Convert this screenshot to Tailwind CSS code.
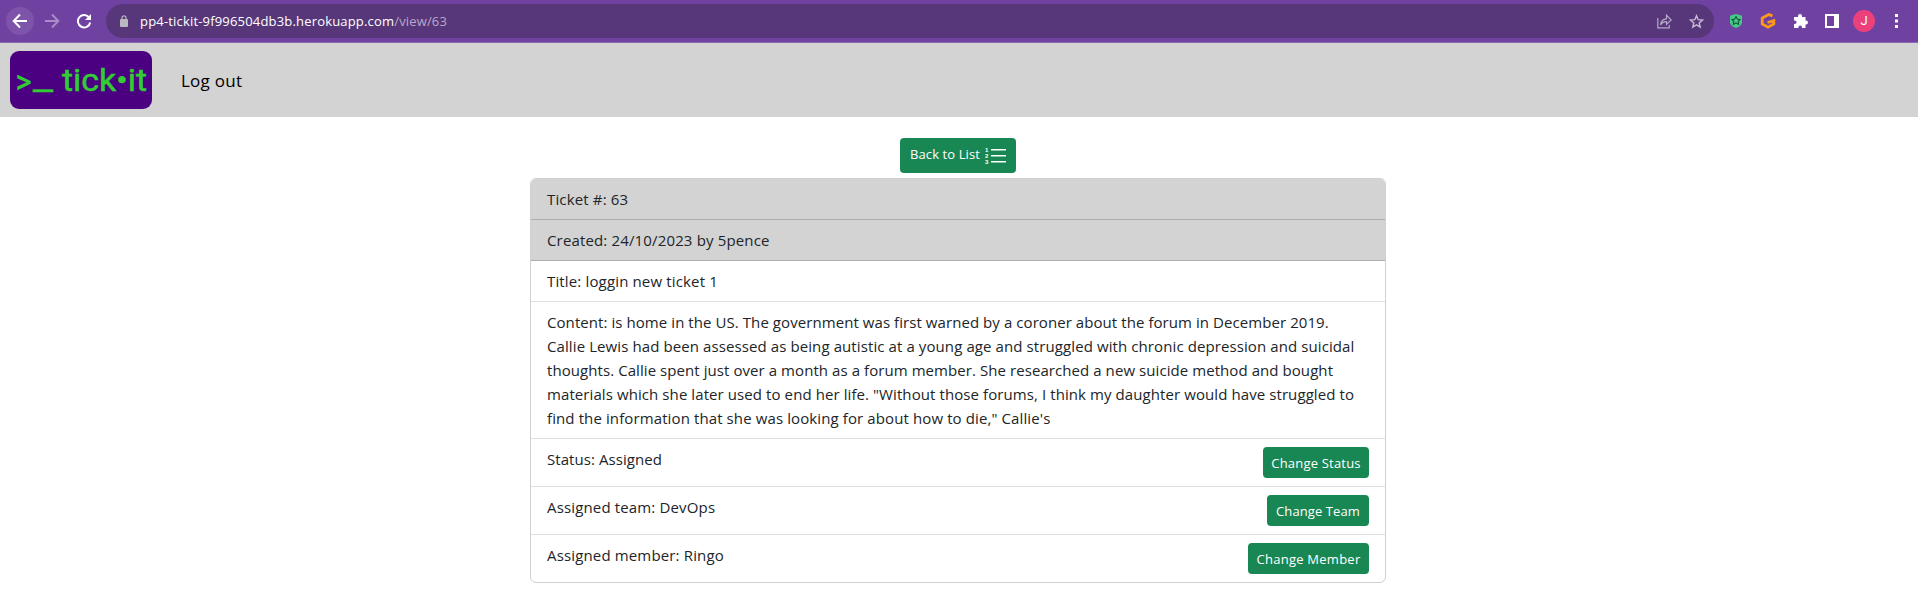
<!DOCTYPE html>
<html lang="en">
<head>
<meta charset="utf-8">
<title>tick-it</title>
<script src="https://cdn.jsdelivr.net/npm/@tailwindcss/browser@4"></script>
</head>
<body class="h-[595px] overflow-hidden bg-white font-['Open_Sans',sans-serif] text-[#212529]">
<div class="flex h-[43px] items-center border-b border-[#8c68b5] bg-[#6f42a1]">
  <div class="ml-[6px] flex size-7 items-center justify-center rounded-full bg-[#7d54aa]">
    <svg class="size-4" viewBox="0 0 16 16" fill="none" stroke="#fff" stroke-width="2"><path d="M15 8H2.500M8 1.500 1.700 8 8 14.500"/></svg>
  </div>
  <svg class="ml-[10px] size-4" viewBox="0 0 16 16" fill="none" stroke="#a98cc8" stroke-width="2"><path d="M1 8h12.500M8 1.500 14.300 8 8 14.500"/></svg>
  <svg class="ml-4 size-4" viewBox="0 0 16 16"><path d="M13.300 4.800A6.200 6.200 0 1 0 14.200 9.500" fill="none" stroke="#fff" stroke-width="2"/><path d="M15 1v6H9z" fill="#fff"/></svg>
  <div class="ml-[14px] flex h-[34px] w-[1608px] items-center rounded-full bg-[#57377a]">
    <svg class="ml-[14px] h-3 w-2" viewBox="0 0 8 12"><rect y="4" width="8" height="8" rx="1" fill="#b9b9bf"/><path d="M2 4.500V2.800a2 2 0 0 1 4 0v1.700" fill="none" stroke="#b9b9bf" stroke-width="1.200"/></svg>
    <p class="mt-px ml-[12px] text-[13px] whitespace-nowrap text-white"><span class="tracking-[0.180px]">pp4-tickit-9f996504db3b.herokuapp.com</span><span class="tracking-[0.150px] text-[#b9a9ca]">/view/63</span></p>
    <svg class="ml-auto size-[15px]" viewBox="0 0 15 15" fill="none" stroke="#b7a8c8" stroke-width="1.200"><path d="M.8 4v9.800h11.500V11M3.500 10.800C4 7 6 5 9.500 4.800V1.200L14.200 6 9.500 10.400V7.600C7 7.600 5 8.500 3.500 10.800z"/></svg>
    <svg class="mr-[10px] ml-[17px] size-[15px]" viewBox="0 0 15 15" fill="none" stroke="#c8bcd5" stroke-width="1.400"><path d="m7.500 1.700 1.700 4 4.300.4-3.300 2.800 1 4.200-3.700-2.200-3.700 2.200 1-4.200L1.500 6.100l4.300-.4z"/></svg>
  </div>
  <svg class="ml-4 h-[14px] w-3" viewBox="0 0 12 14"><path d="M6 0 12 1.800V8c0 3-3 5-6 6-3-1-6-3-6-6V1.800z" fill="#45cb85"/><path d="m6 2.600 1.300 2.500 2.700.5L8.200 7.500l.4 2.700L6 9l-2.600 1.200.4-2.700L2 5.600l2.700-.5z" fill="none" stroke="#17553b" stroke-width="1.100"/></svg>
  <svg class="ml-[18px] h-4 w-4" viewBox="0 0 16 16" fill="none" stroke="#fd9a1c" stroke-width="2.800"><path d="M12.500 2.800 8.800 1.600 2.200 5v6L8 14.200 13.800 11V7.600L7.500 9.500"/></svg>
  <svg class="ml-[17px] size-[15px]" viewBox="0 0 15 15" fill="#fff"><path d="M1 3h4V2a2 2 0 0 1 4 0v1h3.500v3.500H13a2 2 0 0 1 0 4h-.5V14H9v-.8a1.800 1.800 0 0 0-3.600 0v.8H1v-4h.8a1.700 1.700 0 0 0 0-3.500H1z"/></svg>
  <svg class="ml-[17px] size-[14px]" viewBox="0 0 14 14"><path d="M0 0h14v14H0zM2 2v10h7V2z" fill="#fff" fill-rule="evenodd"/></svg>
  <div class="ml-[14px] flex size-[22px] items-center justify-center rounded-full bg-[#ec407a] font-[Roboto] text-[13px] text-white">J</div>
  <svg class="ml-[20px] h-[14px] w-[3px]" viewBox="0 0 3 14" fill="#fff"><path d="M0 0h3v3H0zM0 5.500h3v3H0zM0 11h3v3H0z"/></svg>
</div>
<nav class="flex h-[74px] items-center bg-[#d3d3d3] pl-[10px]">
  <svg class="h-[58px] w-[142px]" viewBox="0 0 142 58" fill="#32cd32" stroke="#32cd32" font-family="Roboto, sans-serif"><rect width="142" height="58" rx="9" fill="#4b0082" stroke="none"/>
    <text x="5.500" y="42" font-size="33" stroke-width=".5" textLength="16" lengthAdjust="spacingAndGlyphs">&gt;</text>
    <text x="23" y="38.500" font-size="30" stroke-width=".6" textLength="20" lengthAdjust="spacingAndGlyphs">_</text>
    <text x="52" y="40" font-size="30.500" stroke-width=".5" textLength="85" lengthAdjust="spacingAndGlyphs">tick•it</text>
  </svg>
  <a class="mt-px ml-[29px] text-[17px] tracking-[0.250px] text-black">Log out</a>
</nav>
<main class="flex flex-col items-center pt-[21px] pr-[2px]">
  <a class="flex h-[35px] w-[116px] items-center rounded bg-[#198754] pl-[10px] text-[13px] tracking-[0.100px] whitespace-nowrap text-white">
    <span class="-mt-[2px]">Back to List</span>
    <svg class="mr-[9px] ml-auto h-[18px] w-[22px]" viewBox="0 0 22 18" fill="#fff" font-family="Liberation Sans" font-size="6" font-weight="bold"><path d="M6 2h15v1.500H6zM6 8h15v1.500H6zM6 14h15v1.500H6z"/><text x="0" y="5">1</text><text x="0" y="11">2</text><text x="0" y="17">3</text></svg>
  </a>
  <section class="mt-[5px] w-[856px] overflow-hidden rounded-md border border-[#cfd0d1] text-[15px] leading-6 tracking-[0.150px] whitespace-nowrap">
    <div class="h-[41px] border-b border-[#adadae] bg-[#d3d3d3] px-4 py-2">Ticket #: 63</div>
    <div class="h-[41px] border-b border-[#adadae] bg-[#d3d3d3] px-4 py-2">Created: 24/10/2023 by 5pence</div>
    <div class="h-[41px] border-b border-[#dee0e2] px-4 py-2">Title: loggin new ticket 1</div>
    <div class="h-[137px] border-b border-[#dee0e2] px-4 py-2">
      <span class="tracking-[0.070px]">Content: is home in the US. The government was first warned by a coroner about the forum in December 2019.</span><br>
      <span class="tracking-[0.097px]">Callie Lewis had been assessed as being autistic at a young age and struggled with chronic depression and suicidal</span><br>
      <span class="tracking-[0.070px]">thoughts. Callie spent just over a month as a forum member. She researched a new suicide method and bought</span><br>
      <span class="tracking-[0.087px]">materials which she later used to end her life. "Without those forums, I think my daughter would have struggled to</span><br>
      <span class="tracking-[0.110px]">find the information that she was looking for about how to die," Callie's</span>
    </div>
    <div class="flex h-12 items-start justify-between border-b border-[#dee0e2] px-4 py-2"><span class="tracking-[0.060px]">Status: Assigned</span><a class="flex h-[31px] w-[106px] items-center justify-center rounded bg-[#198754] text-[13px] tracking-[0.200px] text-white">Change Status</a></div>
    <div class="flex h-12 items-start justify-between border-b border-[#dee0e2] px-4 py-2"><span>Assigned team: DevOps</span><a class="flex h-[31px] w-[102px] items-center justify-center rounded bg-[#198754] text-[13px] tracking-[0.100px] text-white">Change Team</a></div>
    <div class="flex h-[47px] items-start justify-between px-4 py-2"><span>Assigned member: Ringo</span><a class="flex h-[31px] w-[121px] items-center justify-center rounded bg-[#198754] text-[13px] tracking-[0.250px] text-white">Change Member</a></div>
  </section>
</main>
</body>
</html>
